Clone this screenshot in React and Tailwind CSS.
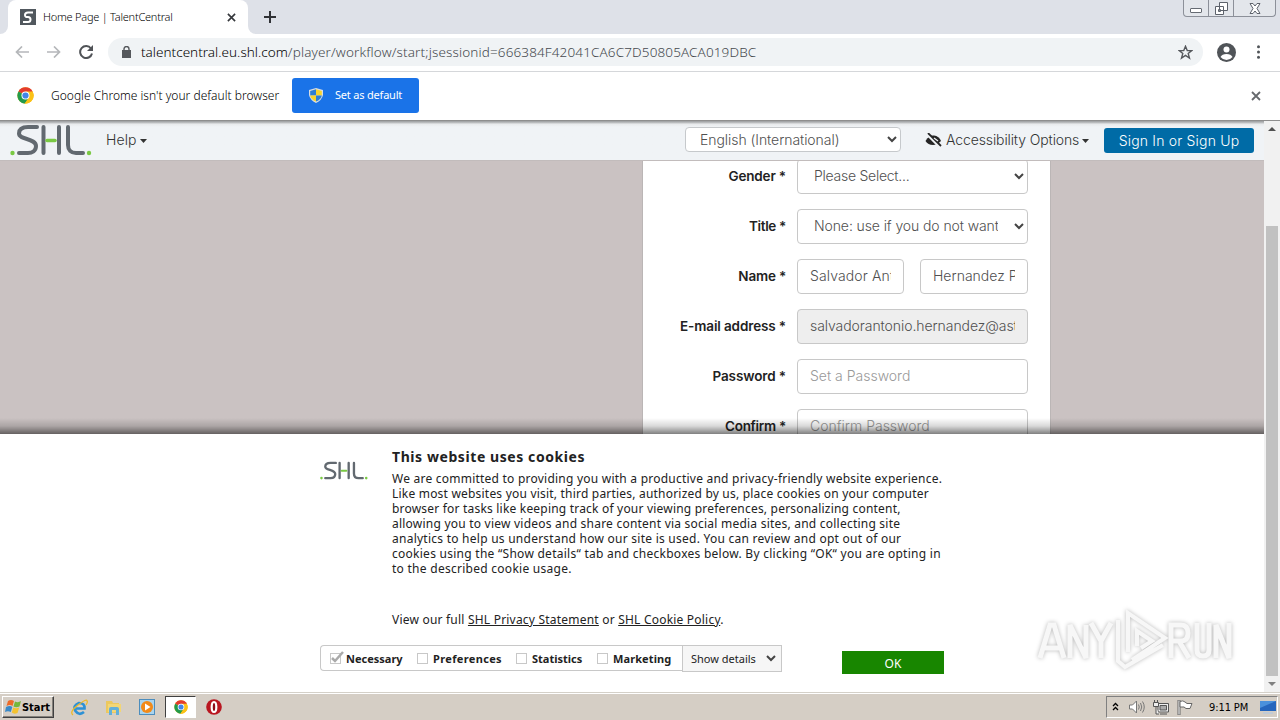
import React from "react";

const Shl = ({ className }) => (
  <svg className={className} viewBox="0 0 82 32" fill="none">
    <g stroke="#626970" strokeWidth="4" strokeLinecap="round" strokeLinejoin="round">
      <path d="M27 3H18C11 3 9 6 9 9.500C9 16 26 14 26 22C26 27 22 29 18 29H9" />
      <path d="M33.500 3V29M49 3V29M58 3V21C58 26 61 29 66 29H73" />
    </g>
    <path d="M37 16.500H45" stroke="#7ac943" strokeWidth="3.500" strokeLinecap="round" />
    <circle cx="2.500" cy="29" r="2.200" fill="#7ac943" />
    <circle cx="79" cy="29" r="2.200" fill="#7ac943" />
  </svg>
);

const Chrome = ({ className }) => (
  <svg className={className} viewBox="0 0 24 24">
    <circle cx="12" cy="12" r="11.500" fill="#fbc116" />
    <path d="M12 12L2 6.300A11.500 11.500 0 0 1 22 6.300Z" fill="#e33b2e" />
    <path d="M12 12L2 6.300A11.500 11.500 0 0 0 11 23.400L17 15Z" fill="#229a4b" />
    <path d="M12 6.300H22A11.500 11.500 0 0 1 11 23.400L17 14.500Z" fill="#fbc116" />
    <circle cx="12" cy="12" r="5.700" fill="#fff" />
    <circle cx="12" cy="12" r="4.400" fill="#4285e8" />
  </svg>
);

const Chevron = ({ className }) => (
  <svg className={className} viewBox="0 0 10 7" fill="none" stroke="#444" strokeWidth="2">
    <path d="M1 1L5 5L9 1" />
  </svg>
);

const Cross = ({ className }) => (
  <svg className={className} viewBox="0 0 10 10" fill="none" stroke="currentColor" strokeWidth="1.800">
    <path d="M1 1L9 9M9 1L1 9" />
  </svg>
);

const Caret = () => (
  <svg className="h-1 w-[7px] shrink-0" viewBox="0 0 7 4"><path d="M0 0H7L3.500 4Z" fill="#333" /></svg>
);

function Field({ text, select, disabled, placeholder, width = "w-[231px]", tracking = "" }) {
  return (
    <div className={`${width} flex h-[35px] items-center rounded-[4px] border border-[#c8c8c8] ${select ? "pl-4 pr-[3px]" : "px-3"} ${disabled ? "bg-[#eee]" : "bg-white"}`}>
      <span className={`min-w-0 flex-1 overflow-hidden whitespace-nowrap pb-[3px] ${tracking} ${placeholder ? "text-[#999]" : "text-[#505050]"}`}>{text}</span>
      {select && <Chevron className="ml-[16px] h-[7px] w-[10px] shrink-0" />}
    </div>
  );
}

function Row({ label, tracking, children }) {
  return (
    <div className="flex h-[35px] items-center">
      <div className={`w-[143px] shrink-0 whitespace-nowrap text-right text-[13.500px] font-semibold text-[#222] ${tracking}`}>{label} *</div>
      <div className="ml-[11px] flex gap-4">{children}</div>
    </div>
  );
}

function Check({ label, checked, className }) {
  return (
    <div className={`flex items-center gap-[5px] ${className}`}>
      <div className="flex size-[11px] shrink-0 border border-[#c8c8c8]">
        {checked && (
          <svg className="-mt-[3px] h-3 w-[13px] shrink-0 overflow-visible" viewBox="0 0 13 12" fill="none" stroke="#aaa" strokeWidth="2.500"><path d="M1 7L4 10L12 1" /></svg>
        )}
      </div>
      <span className="whitespace-nowrap pt-[2px]">{label}</span>
    </div>
  );
}

const paragraph = [
  ["We are committed to providing you with a productive and privacy-friendly website experience.", "tracking-[0.230px]"],
  ["Like most websites you visit, third parties, authorized by us, place cookies on your computer", "tracking-[0.205px]"],
  ["browser for tasks like keeping track of your viewing preferences, personalizing content,", "tracking-[0.200px]"],
  ["allowing you to view videos and share content via social media sites, and collecting site", "tracking-[0.225px]"],
  ["analytics to help us understand how our site is used. You can review and opt out of our", "tracking-[0.250px]"],
  ["cookies using the “Show details“ tab and checkboxes below. By clicking “OK“ you are opting in", "tracking-[0.265px]"],
  ["to the described cookie usage.", "tracking-[0.270px]"],
];

function TabStrip() {
  return (
    <div className="flex h-[34px] items-start bg-[#dee1e8]">
      <div className="flex h-[34px] w-2 shrink-0 items-end bg-white"><div className="h-[34px] w-2 rounded-br-[8px] bg-[#dee1e8]" /></div>
      <div className="flex h-[34px] w-[240px] shrink-0 items-center rounded-t-[8px] bg-white pl-3">
        <svg className="size-4 shrink-0" viewBox="0 0 16 16"><path d="M0 0H16V16H0Z" fill="#51585e" /><path d="M13 3.500H8Q5 3.500 5 6T8 8Q10.500 8 10.500 10.500T8 13H3" fill="none" stroke="#fff" strokeWidth="2" /></svg>
        <span className="ml-[7px] w-[130px] whitespace-nowrap text-[11px] font-light tracking-[-0.240px] text-black">Home Page | TalentCentral</span>
        <Cross className="ml-[54px] size-[9px] text-[#35383c]" />
      </div>
      <div className="flex h-[34px] w-2 shrink-0 bg-white"><div className="h-[34px] w-2 rounded-bl-[8px] bg-[#dee1e8]" /></div>
      <svg className="ml-2 mt-[11px] size-3" viewBox="0 0 12 12" stroke="#303236" strokeWidth="2"><path d="M6 0V12M0 6H12" /></svg>
      <div className="ml-auto mr-1 flex h-[17px] w-[93px] rounded-b-[4px] border border-t-0 border-[#8c9099] bg-[#e3e6eb]">
        <div className="flex w-[25px] items-end justify-center border-r border-[#8c9099] pb-[3px]"><div className="h-[5px] w-3 rounded-[1px] border border-[#666b73] bg-white" /></div>
        <div className="flex w-[25px] items-center justify-center border-r border-[#8c9099]">
          <svg className="size-[13px]" viewBox="0 0 13 13" fill="#fff" stroke="#5d626b"><path d="M4.500 .5H12.500V8.500H4.500ZM.5 4.500H8.500V12.500H.5ZM3.500 7.500H5.500V9.500H3.500Z" /></svg>
        </div>
        <div className="flex flex-1 items-center justify-center">
          <svg className="h-[11px] w-3" viewBox="0 0 12 11" fill="#fff" stroke="#5d626b"><path d="M1 .5H4L6 3L8 .5H11L8 5.500L11 10.500H8L6 8L4 10.500H1L4 5.500Z" /></svg>
        </div>
      </div>
    </div>
  );
}

function Toolbar() {
  return (
    <div className="flex h-[38px] items-center border-b border-[#d5d7da] bg-white pb-px pl-[15px]">
      <svg className="h-3 w-[14px]" viewBox="0 0 14 12" fill="none" stroke="#b5b7ba" strokeWidth="1.700"><path d="M14 6H1.500M7 .5L1.500 6L7 11.500" /></svg>
      <svg className="ml-[18px] h-3 w-[14px]" viewBox="0 0 14 12" fill="none" stroke="#b5b7ba" strokeWidth="1.700"><path d="M0 6H12.500M7 .5L12.500 6L7 11.500" /></svg>
      <svg className="ml-[18px] size-[14px]" viewBox="0 0 14 14"><path d="M12 3.500A6 6 0 1 0 13 8.500" fill="none" stroke="#505357" strokeWidth="2" /><path d="M14 0V6H8Z" fill="#505357" /></svg>
      <div className="ml-[15px] flex h-7 w-[1095px] items-center rounded-full bg-[#f0f3f5] pl-[14px] pr-[10px]">
        <svg className="h-3 w-[9px]" viewBox="0 0 9 12"><path d="M0 4H9V12H0Z" fill="#55585c" /><path d="M2 5V3A2.500 2.500 0 0 1 7 3V5" fill="none" stroke="#55585c" strokeWidth="1.400" /></svg>
        <span className="ml-[10px] whitespace-nowrap text-[13.500px] font-light leading-5 text-[#45494e]"><span className="tracking-[0.020px] text-black">talentcentral.eu.shl.com</span><span className="tracking-[0.130px]">/player/workflow/start;jsessionid=666384F42041CA6C7D50805ACA019DBC</span></span>
        <svg className="ml-auto size-[15px]" viewBox="0 0 24 24" fill="none" stroke="#55585c" strokeWidth="2.200"><path d="M12 2L14.800 9H22L16.300 13.600L18.400 21L12 16.700L5.600 21L7.700 13.600L2 9H9.200Z" /></svg>
      </div>
      <svg className="ml-[14px] size-[19px]" viewBox="0 0 19 19"><circle cx="9.500" cy="9.500" r="9.500" fill="#505458" /><circle cx="9.500" cy="6.500" r="3" fill="#fff" /><path d="M3.500 14Q5 11 9.500 11T15.500 14Q13 17 9.500 17T3.500 14" fill="#fff" /></svg>
      <svg className="ml-[21px] h-[14px] w-[3px]" viewBox="0 0 3 14" fill="#505458"><circle cx="1.500" cy="1.700" r="1.500" /><circle cx="1.500" cy="7" r="1.500" /><circle cx="1.500" cy="12.300" r="1.500" /></svg>
    </div>
  );
}

function InfoBar() {
  return (
    <div className="flex h-12 items-center bg-white pb-px pl-[17px] font-light">
      <Chrome className="size-[17px]" />
      <span className="ml-[17px] w-[229px] whitespace-nowrap text-[12px] tracking-[0.020px] text-black">Google Chrome isn't your default browser</span>
      <div className="ml-3 flex h-[35px] w-[127px] items-center rounded-[3px] bg-[#1a73e8] pl-[17px] text-[11px] text-white">
        <svg className="h-[15px] w-[14px]" viewBox="0 0 14 15"><path d="M7 0L14 2V7Q13 12 7 15Q1 12 0 7V2Z" fill="#d8dde2" /><path d="M7 1.200V7.500H1.200V3Z" fill="#2d7fd3" /><path d="M7 1.200V7.500H12.800V3Z" fill="#f8d52b" /><path d="M7 7.500V13.600Q2 11.500 1.200 7.500Z" fill="#f8d52b" /><path d="M7 7.500V13.600Q12 11.500 12.800 7.500Z" fill="#2d7fd3" /></svg>
        <span className="ml-3 whitespace-nowrap font-normal tracking-[-0.200px]">Set as default</span>
      </div>
      <Cross className="ml-auto mr-[19px] mt-px size-[10px] text-[#66696d]" />
    </div>
  );
}

function PageHeader() {
  return (
    <div className="flex h-[39px] shrink-0 items-center bg-gradient-to-b from-[#a4a6a8] from-[2%] via-[#e8eaec] via-[8%] to-[#f0f3f6] to-[15%] pb-[2px] pl-[10px] text-[14px] text-[#333]">
      <Shl className="h-8 w-[82px]" />
      <span className="ml-[14px] w-[31px] tracking-[0.100px]">Help</span>
      <span className="ml-[3px] mt-[2px] flex"><Caret /></span>
      <div className="ml-[538px] flex h-[25px] w-[216px] items-center rounded-[4px] border border-[#c6c9cc] bg-white pb-px pl-[14px] pr-[3px]">
        <span className="flex-1 tracking-[-0.060px] text-[#505050]">English (International)</span>
        <Chevron className="h-[7px] w-[10px]" />
      </div>
      <svg className="ml-6 mt-px h-[15px] w-[17px]" viewBox="0 0 17 15"><path d="M.5 8Q4 2 9 2.500Q14 3 16 8Q12 12 8 12Q3 12 .5 8Z" fill="#252525" /><path d="M2 1L15 14" stroke="#f0f3f6" strokeWidth="3" /><path d="M3 0L16 13" stroke="#252525" strokeWidth="1.800" /><path d="M9 5L13 8" stroke="#f0f3f6" strokeWidth="1.200" /></svg>
      <span className="ml-[4px] w-[133px] whitespace-nowrap tracking-[-0.110px]">Accessibility Options</span>
      <span className="ml-[3px] mt-[2px] flex"><Caret /></span>
      <div className="ml-[15px] mt-px flex h-[25px] w-[150px] items-center justify-center whitespace-nowrap rounded-[3px] bg-[#006ba6] tracking-[0.180px] text-white">Sign In or Sign Up</div>
    </div>
  );
}

function CookieBanner() {
  return (
    <div className="flex h-[258px] shrink-0 bg-white pl-[320px] font-['Noto_Sans',sans-serif] text-[12px] font-normal text-[#222]">
      <div className="flex w-[630px] shrink-0 flex-col">
        <div className="flex h-[194px]">
          <Shl className="mt-[27px] h-[19px] w-[48px] shrink-0" />
          <div className="ml-6 mt-[13px] whitespace-nowrap">
            <div className="h-[24px] text-[14px] font-bold leading-5 tracking-[0.580px]">This website uses cookies</div>
            {paragraph.map(([line, tracking]) => <div key={line} className={`h-[15px] leading-[15px] ${tracking}`}>{line}</div>)}
            <div className="mt-[36px] leading-[15px] tracking-[0.210px]">View our full <a className="underline">SHL Privacy Statement</a> or <a className="underline">SHL Cookie Policy</a>.</div>
          </div>
        </div>
        <div className="mt-[17px] flex items-start text-[11px]">
          <div className="flex h-[26px] w-[362px] items-center rounded-l-[4px] border border-r-0 border-[#c8c8c8] pl-[9px] font-bold">
            <Check label="Necessary" checked className="w-[87px]" />
            <Check label="Preferences" className="w-[99px] tracking-[0.350px]" />
            <Check label="Statistics" className="w-[81px]" />
            <Check label="Marketing" className="tracking-[0.100px]" />
          </div>
          <div className="flex h-[27px] w-[100px] items-center border border-[#c8c8c8] bg-[#f6f6f6] pl-2 pr-[5px]">
            <span className="flex-1 whitespace-nowrap pt-px">Show details</span><Chevron className="h-[7px] w-[10px]" />
          </div>
          <div className="ml-[60px] mt-[6px] flex h-[23px] w-[102px] items-center justify-center bg-[#188600] pt-[2px] text-[12px] text-white">OK</div>
        </div>
      </div>
      <svg className="ml-[86px] mt-[172px] h-[70px] w-[200px] shrink-0 overflow-visible drop-shadow-[0_0_2px_rgba(0,0,0,0.28)]" viewBox="0 0 200 70">
        <g fill="none" stroke="#f7f7f7" strokeWidth="5">
          <path d="M4 52L14 19H18L28 52M9 42H23M34 52V19L50 52V19M55 17L65 35L75 17M65 34V52" />
          <path d="M140 52V19H150Q157 19 157 27T150 35H140M148 35L158 52M166 17V44Q166 50 172 50T178 44V17M185 52V19L198 52V17" transform="translate(-5)" />
          <path d="M82 14V55L89 61L127 39M92 46V7L129 32L96 54M101 40V25L116 35L105 42" strokeWidth="4" />
        </g>
      </svg>
    </div>
  );
}

function Page() {
  return (
    <div className="flex h-[571px]">
      <div className="flex w-[1264px] shrink-0 flex-col font-['Inter',sans-serif] font-light">
        <PageHeader />
        <div className="relative h-[274px] shrink-0 overflow-hidden border-t border-[#c2bcbc] bg-[#cac2c2] pl-[642px]">
          <div className="-mt-[2px] flex h-[290px] w-[409px] flex-col gap-[15px] border-x border-[#bbb6b6] bg-white text-[14px]">
            <Row label="Gender" tracking="tracking-[-0.160px]"><Field select text="Please Select..." tracking="tracking-[-0.260px]" /></Row>
            <Row label="Title" tracking="tracking-[-0.350px]"><Field select text="None: use if you do not want to disclose" tracking="tracking-[-0.100px]" /></Row>
            <Row label="Name" tracking="tracking-[-0.200px]"><Field text="Salvador Antonio" width="w-[107px]" tracking="tracking-[0.120px]" /><Field text="Hernandez Perez" width="w-[108px]" /></Row>
            <Row label="E-mail address" tracking="tracking-[-0.130px]"><Field disabled text="salvadorantonio.hernandez@astra" tracking="tracking-[-0.070px]" /></Row>
            <Row label="Password" tracking="tracking-[-0.120px]"><Field placeholder text="Set a Password" /></Row>
            <Row label="Confirm" tracking="tracking-[-0.300px]"><Field placeholder text="Confirm Password" /></Row>
          </div>
          <div className="absolute inset-x-0 bottom-0 h-4 bg-gradient-to-b from-transparent via-black/15 to-black/50" />
        </div>
        <CookieBanner />
      </div>
      <div className="flex w-4 flex-col items-center bg-[#f1f1f1] pt-[6px]">
        <svg className="h-[4px] w-2" viewBox="0 0 8 4"><path d="M0 4L4 0L8 4Z" fill="#505050" /></svg>
        <div className="mt-[95px] h-[450px] w-3 bg-[#c1c1c1]" />
        <svg className="mt-[6px] h-[4px] w-2" viewBox="0 0 8 4"><path d="M0 0H8L4 4Z" fill="#808080" /></svg>
      </div>
    </div>
  );
}

function Taskbar() {
  return (
    <div className="flex h-7 items-center border-t border-[#d4d0c8] bg-[#d5cec5] pt-px shadow-[inset_0_1px_0_#fff] font-['DejaVu_Sans_Condensed','DejaVu_Sans',sans-serif] text-[11px] text-black">
      <div className="ml-[2px] flex h-[22px] w-[52px] items-center border border-[#404040] border-l-white border-t-white pl-[2px] shadow-[inset_-1px_-1px_0_#85817b]">
        <svg className="h-4 w-[17px] shrink-0" viewBox="0 0 17 16"><path d="M3 2Q6 0 9 2L7.500 7Q5 5 1.500 7Z" fill="#ed6b28" /><path d="M10 2.500Q13 4 16 2L14.500 7.500Q11 9 8.500 7.500Z" fill="#75b73b" /><path d="M1 8Q5 6 7.300 8L5.800 13Q3 11.500 0 13Z" fill="#3889c8" /><path d="M8.300 8.500Q11 10 14.200 8.500L12.500 14Q9 15.500 6.800 13.500Z" fill="#f4c22f" /></svg>
        <span className="pt-[2px] text-[11px] font-bold tracking-[-0.050px]">Start</span>
      </div>
      <svg className="ml-[17px] size-[17px]" viewBox="0 0 17 17" fill="none"><path d="M13 13Q8 17 4.500 12T8 4Q14 4 13.500 9.500H5" stroke="#2d91d5" strokeWidth="2.700" /><path d="M2 16Q-2 13 7 6T16 2Q17 3 15 6" stroke="#edb928" strokeWidth="1.300" /></svg>
      <svg className="ml-[17px] size-[17px]" viewBox="0 0 17 17"><path d="M1 2H7L8 4H14V14H1Z" fill="#ecc85d" /><path d="M3 5H16V13H3Z" fill="#f3d675" /><path d="M4 16V10Q4 8 6 8H12Q14 8 14 10V16H11V11H7V16Z" fill="#63afd9" /></svg>
      <div className="ml-[17px] flex size-4 items-center justify-center border border-[#4c8dbd] bg-[#a9d4ee]"><svg className="size-3" viewBox="0 0 12 12"><circle cx="6" cy="6" r="6" fill="#f28a18" /><path d="M4 2.500L9.500 6L4 9.500Z" fill="#fff" /></svg></div>
      <div className="ml-[10px] flex h-[22px] w-[31px] items-center justify-center border border-white border-l-[#404040] border-t-[#404040] bg-white"><Chrome className="size-[14px]" /></div>
      <svg className="ml-[10px] size-4" viewBox="0 0 16 16"><circle cx="8" cy="8" r="7.800" fill="#b91620" /><ellipse cx="8" cy="8" rx="2.300" ry="5" fill="#8e0d18" stroke="#fff" strokeWidth="2.200" /></svg>
      <div className="ml-auto mr-[2px] flex h-[22px] w-[172px] items-center border border-white border-l-[#808080] border-t-[#808080] pl-[5px]">
        <svg className="mb-[2px] h-[9px] w-[7px]" viewBox="0 0 7 9" fill="none" stroke="#000" strokeWidth="1.300"><path d="M1 4L3.500 1.500L6 4M1 8L3.500 5.500L6 8" /></svg>
        <svg className="ml-[10px] h-[14px] w-4" viewBox="0 0 16 14" fill="#fff" stroke="#777"><path d="M.5 5H3.500L7.500 1V13L3.500 9H.5Z" /><path d="M9.500 4.500Q11 7 9.500 9.500M11.500 3Q14 7 11.500 11M13.500 1.500Q17 7 13.500 12.500" fill="none" /></svg>
        <svg className="ml-2 h-[15px] w-4" viewBox="0 0 16 15" fill="#eee" stroke="#555"><path d="M5 3.500H15.500V12H5Z" /><path d="M7 5.500H13.500V10H7Z" fill="#aaa" /><path d="M7 14H14M3 7V14H6M.5 2.500H5.500V6.500H.5ZM1.500 0V2M4.500 0V2" /></svg>
        <svg className="ml-2 h-[15px] w-4" viewBox="0 0 16 15" fill="#fff" stroke="#666"><path d="M1 0H3V15H1Z" /><path d="M3 1.500Q6 0 8 2L10 3.500H15L13 8.500H9L7 7H3Z" /></svg>
        <span className="ml-4 w-10 whitespace-nowrap pt-[2px] tracking-[-0.100px]">9:11 PM</span>
        <svg className="ml-[11px] h-[13px] w-4" viewBox="0 0 16 13"><path d="M0 0H16V10H0Z" fill="#2666bd" /><path d="M0 0H16L0 7Z" fill="#4b91dc" /><path d="M3 11H13V13H3Z" fill="#c1cbd6" /></svg>
      </div>
    </div>
  );
}

export default function App() {
  return (
    <div className="h-[720px] w-[1280px] overflow-hidden bg-white font-['Noto_Sans',sans-serif]">
      <TabStrip />
      <Toolbar />
      <InfoBar />
      <div className="h-px bg-[#8e8e8e]" />
      <Page />
      <Taskbar />
    </div>
  );
}
